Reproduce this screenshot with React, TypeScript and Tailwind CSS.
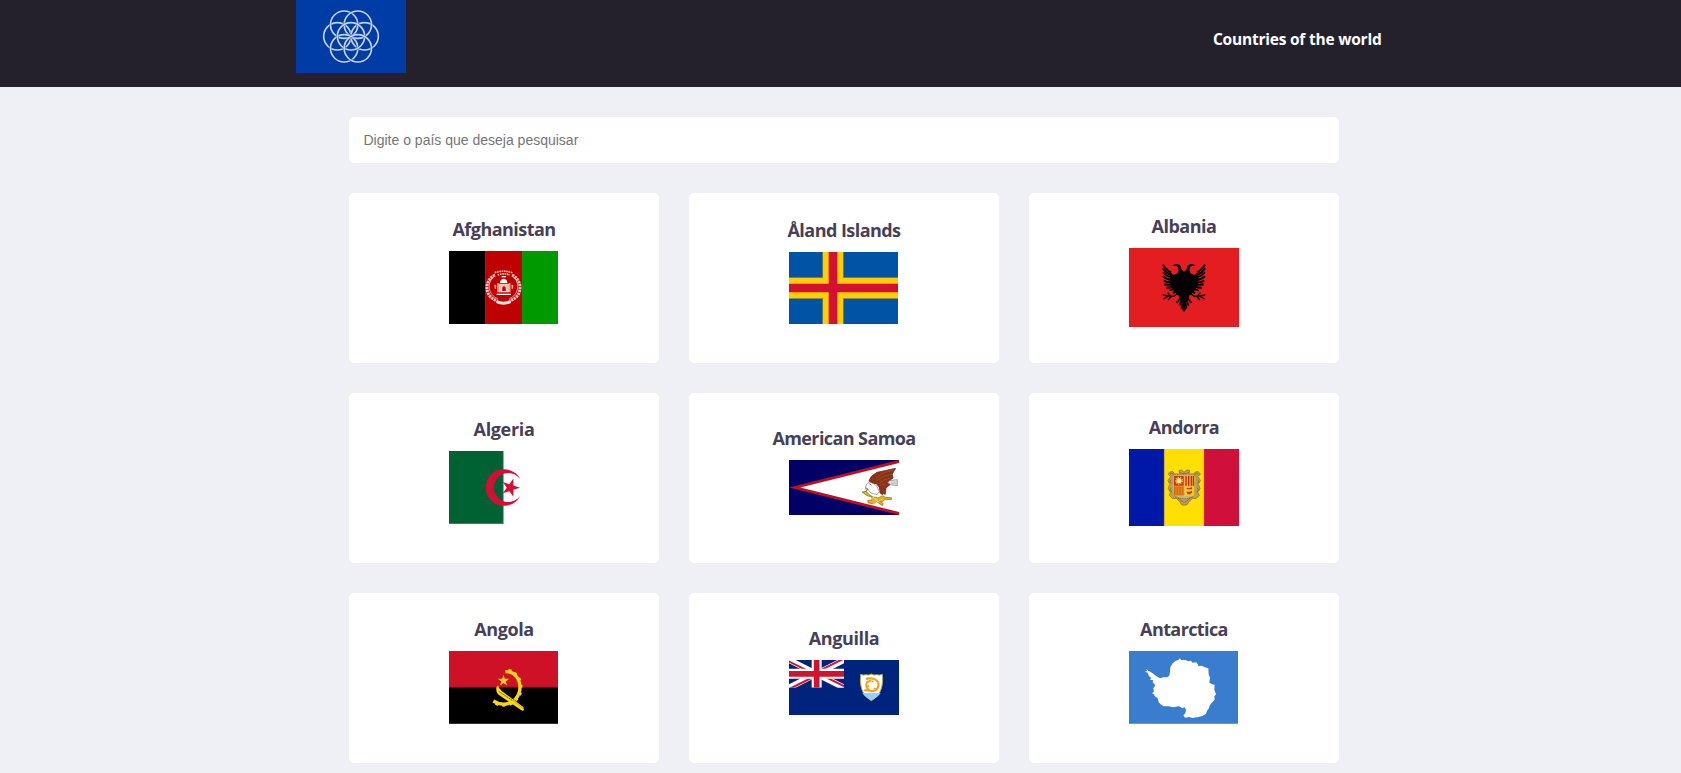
import type { ReactNode } from "react";

type Country = { name: string; tracking: string; flag: ReactNode };

function Logo() {
  const rings = [
    [124, 109],
    [206, 109],
    [144.5, 74],
    [185.5, 74],
    [144.5, 145],
    [165, 109],
    [185.5, 145],
  ];
  return (
    <svg className="block h-[73px] w-[110px]" viewBox="0 0 330 219" preserveAspectRatio="none">
      <rect width="330" height="219" fill="#003ca5" />
      {rings.map(([cx, cy], i) => (
        <g key={i} fill="none">
          <circle cx={cx} cy={cy} r="41" stroke="#003ca5" strokeWidth="8" strokeOpacity="0.55" />
          <circle cx={cx} cy={cy} r="41" stroke="#c3d3ec" strokeWidth="5" />
        </g>
      ))}
    </svg>
  );
}

function Afghanistan() {
  return (
    <svg className="block h-[73px] w-[109px]" viewBox="0 0 327 219">
      <rect width="110" height="219" fill="#000" />
      <rect x="109" width="110" height="219" fill="#bf0000" />
      <rect x="219" width="108" height="219" fill="#009900" />
      <g fill="none" stroke="#fff">
        <path d="M138 72C104 88 105 138 146 150M189 72C223 88 222 138 181 150" strokeWidth="9" strokeOpacity="0.75" strokeDasharray="7 2" />
        <path d="M134 79C113 94 117 132 146 143M193 79C214 94 210 132 181 143" strokeWidth="3" strokeOpacity="0.6" />
        <path d="M137 65q27 -9 53 0M146 72q18 -7 36 0" strokeWidth="5" strokeDasharray="5 2" strokeOpacity="0.75" />
        <path d="M143 152q21 9 42 0" strokeWidth="9" strokeOpacity="0.9" />
      </g>
      <path d="M143 130h43M149 122h31" stroke="#fff" strokeWidth="4" />
      <path d="M153 96q0 -12 11 -13q11 1 11 13z" fill="#fff" />
      <path d="M149 98h31v24h-10v-12q-5 -8 -10 0v12h-11z" fill="#f0c3b5" />
      <path d="M147 96v28M182 96v28M139 101v12M190 101v12" stroke="#eda58f" strokeWidth="5" />
      <path d="M158 77h13" stroke="#fff" strokeWidth="4" />
    </svg>
  );
}

function Aland() {
  return (
    <svg className="block h-[72px] w-[109px]" viewBox="0 0 327 216">
      <rect width="327" height="216" fill="#0053a5" />
      <path d="M100 0h64v216h-64zM0 76h327v65H0z" fill="#8b9135" />
      <path d="M102 0h60v216h-60zM0 78h327v60H0z" fill="#ffce00" />
      <path d="M119 0h26v216h-26zM0 95h327v26H0z" fill="#d21034" />
    </svg>
  );
}

function EagleHalf() {
  return (
    <g>
      <path d="M165 72L157 63L155 54L147 48L137 49L131 54L140 53L147 57L149 66L146 76L133 81L124 73L123 110L133 128L149 143L153 156L165 168Z" fill="#000" />
      <g fill="none" stroke="#000" strokeWidth="6">
        <path d="M102 50Q108 62 126 74" />
        <path d="M102 61Q110 74 128 82" />
        <path d="M102 73Q112 84 130 90" />
        <path d="M102 85Q113 95 130 97" />
        <path d="M104 98Q116 105 132 103" />
        <path d="M106 109Q120 113 135 107" />
        <path d="M112 119Q124 120 138 112" />
        <path d="M121 128Q131 125 142 116" />
        <path d="M132 136Q139 131 148 121" />
      </g>
      <path d="M149 134L134 145L119 144L101 141M119 144L103 153M128 145L117 156M126 145L116 134" fill="none" stroke="#000" strokeWidth="4" />
      <path d="M154 150L143 165M158 156L151 173M162 164L157 181" stroke="#000" strokeWidth="5" />
    </g>
  );
}

function Albania() {
  return (
    <svg className="block h-[79px] w-[110px]" viewBox="0 0 330 237">
      <rect width="330" height="237" fill="#e41e20" />
      <EagleHalf />
      <g transform="translate(330 0) scale(-1 1)">
        <EagleHalf />
      </g>
      <path d="M159 155h12l3 25l-9 12l-9 -12z" fill="#000" />
    </svg>
  );
}

function Algeria() {
  return (
    <svg className="block h-[73px] w-[109px]" viewBox="0 0 327 219">
      <rect width="327" height="219" fill="#fff" />
      <rect width="163" height="219" fill="#006233" />
      <path d="M163 0v219" stroke="#67a17f" strokeWidth="2" />
      <path d="M0 218h163" stroke="#67a17f" strokeWidth="2" />
      <path d="M215 86.500A55 55 0 1 0 215 132.500A43.500 43.500 0 1 1 215 86.500Z" fill="#d21034" />
      <path d="M213 110L193.2 116.4L193.2 137.2L181 120.4L161.2 126.8L173.4 110L161.2 93.2L181 99.6L193.2 82.8L193.2 103.6Z" fill="#d21034" />
    </svg>
  );
}

function AmericanSamoa() {
  return (
    <svg className="block h-[55px] w-[110px]" viewBox="0 0 330 165">
      <rect width="330" height="165" fill="#006" />
      <path d="M0 82.500L330 0V165Z" fill="#bd1021" />
      <path d="M34 82.500L330 9V156Z" fill="#fff" />
      <path d="M320 25L286 32L264 37L247 49L240 62L246 72L262 71L270 81L278 99L289 103L291 84L303 74L300 64L312 54L310 42Z" fill="#8c321b" stroke="#5a2514" strokeWidth="2" />
      <path d="M315 30L282 39L263 52M309 42L282 50L266 61M304 55L284 60L272 69M291 75L280 73L272 82" stroke="#a9532c" strokeWidth="2" fill="none" />
      <path d="M242 66L232 72L229 87L237 89L246 99L264 104L271 95L264 79L254 71Z" fill="#fff" stroke="#7b7478" strokeWidth="2" />
      <path d="M230 83l8 5l-7 4M241 71l7 5" stroke="#a77525" strokeWidth="3" fill="none" />
      <path d="M270 78L284 82L282 106L272 100Z" fill="#8c321b" />
      <path d="M302 62L325 59V77L308 75L296 68Z" fill="#e8e8ec" stroke="#777985" strokeWidth="2" />
      <path d="M305 66h17M307 71h16" stroke="#a4a5ae" strokeWidth="2" />
      <path d="M219 96l13 -2l6 8l14 9l17 2l12 -6l8 5l18 1v6l-19 -1l-7 7l-13 -4l15 10l-3 6l-17 -12l-7 7l-18 -3l-2 -8l13 -1l-1 -9l-14 -4z" fill="#e1b323" stroke="#886820" strokeWidth="2" />
      <path d="M235 119l20 -6l14 14M249 134l31 -17M257 101l10 13" stroke="#fff0a0" strokeWidth="2" fill="none" />
    </svg>
  );
}

function Andorra() {
  return (
    <svg className="block h-[77px] w-[110px]" viewBox="0 0 330 231">
      <rect width="107" height="231" fill="#0018a8" />
      <rect x="106" width="119" height="231" fill="#ffdf00" />
      <rect x="225" width="105" height="231" fill="#d0103a" />
      <path d="M106 0v231M224 0v231" stroke="#d8b51c" strokeWidth="2" />
      <path d="M165 70L158 63L150 65L153 75L136 75L132 68L122 69L118 76L125 83L117 94L122 106L118 119L124 130L121 139L130 148L142 148L152 158L159 168L173 168L180 158L190 148L202 148L211 139L206 130L213 119L208 106L214 94L206 83L214 76L208 68L199 69L195 75L180 75L182 64L174 63Z" fill="#bba055" stroke="#9e7b42" strokeWidth="3" />
      <path d="M123 76q9 -7 10 5M207 76q-9 -7 -10 5M127 92q-9 4 0 11M205 92q9 4 0 11M127 116q-7 4 1 14M205 116q7 4 -1 14M146 145q8 9 18 15M185 145q-8 9 -18 15M151 69q7 8 14 5q7 3 15 -5" stroke="#8a6d3f" strokeWidth="3" fill="none" />
      <path d="M133 79H196V133Q196 143 184 144L166 151L147 144Q134 142 133 133Z" fill="#d0b968" />
      <rect x="135" y="81" width="29" height="29" fill="#d52b1e" />
      <rect x="167" y="81" width="27" height="29" fill="#f7c900" />
      <path d="M171 81v29M179 81v29M187 81v29M193 81v29" stroke="#c91d26" strokeWidth="4" />
      <rect x="135" y="112" width="29" height="27" fill="#d66c12" />
      <path d="M141 112v27M149 112v27M157 112v27" stroke="#e28a1a" strokeWidth="3" />
      <rect x="167" y="112" width="27" height="28" fill="#f8ce15" />
      <circle cx="150" cy="95" r="8" fill="#ffef91" />
      <circle cx="150" cy="95" r="10" fill="none" stroke="#f6c62d" strokeWidth="4" strokeDasharray="4 3" />
      <path d="M173 119h14v-4M173 130h14v-4M175 134h10" stroke="#d52b1e" strokeWidth="4" fill="none" />
      <path d="M139 144q26 10 53 0" stroke="#816735" strokeWidth="3" strokeDasharray="4 3" fill="none" />
    </svg>
  );
}

function Angola() {
  return (
    <svg className="block h-[73px] w-[109px]" viewBox="0 0 327 219">
      <rect width="327" height="110" fill="#ce1126" />
      <rect y="109" width="327" height="110" fill="#000" />
      <path d="M0 109h327" stroke="#670913" strokeWidth="2" />
      <path d="M0 218h327" stroke="#5a5a5a" strokeWidth="2" />
      <g fill="none" stroke="#f9d616">
        <path d="M169 62C204 60 218 96 211 123C202 155 166 171 133 150" strokeWidth="10" />
        <path d="M181 64l3 -9M195 72l6 -7M206 87l9 -4M211 106h9M208 126l9 4M198 142l7 6M184 154l4 8M164 159l1 8M145 156l-3 7" strokeWidth="9" />
      </g>
      <path d="M163.500 71L167.500 83.500H180.600L170 91.200L174.100 103.700L163.500 96L152.900 103.700L157 91.200L146.400 83.500H159.500Z" fill="#f9d616" />
      <path d="M147 103C138 109 141 126 151 133L216 177Q222 182 225 176L223 168L158 119Q149 113 147 103Z" fill="#f9d616" />
      <path d="M151 122L191 149M158 119L205 153" stroke="#211b03" strokeWidth="2" strokeDasharray="5 2" />
      <path d="M194 150L224 173" stroke="#a58d11" strokeWidth="1.500" />
    </svg>
  );
}

function Anguilla() {
  return (
    <svg className="block h-[55px] w-[110px]" viewBox="0 0 330 165">
      <defs>
        <clipPath id="canton">
          <path d="M0 0h165v83H0z" />
        </clipPath>
      </defs>
      <rect width="330" height="165" fill="#00247d" />
      <g clipPath="url(#canton)">
        <path d="M0 0L165 83M165 0L0 83" stroke="#fff" strokeWidth="18" />
        <path d="M-3 3L82 45M168 80L83 38M162 -3L80 38M3 86L85 45" stroke="#cf142b" strokeWidth="6" />
        <path d="M83 0v83M0 41.500h165" stroke="#fff" strokeWidth="30" />
        <path d="M83 0v83M0 41.500h165" stroke="#cf142b" strokeWidth="17" />
      </g>
      <path d="M215 43Q223 47 231 44Q240 47 247 42Q255 47 263 44Q272 47 280 43C283 75 278 104 247 122C216 104 212 74 215 43Z" fill="#fff" stroke="#a1aa4f" strokeWidth="3" />
      <path d="M220 99H275Q267 112 247 121Q228 112 220 99Z" fill="#9cf" />
      <g fill="none" stroke="#ff9d16" strokeWidth="6">
        <path d="M232 57Q254 50 266 65L270 74" />
        <path d="M268 73Q268 93 249 94L229 89" />
        <path d="M241 91Q227 80 234 67L246 61" />
      </g>
      <path d="M229 54l10 -2l-4 10zM272 75l-10 6l8 4zM228 86l-4 7l9 2zM252 60l2 7l-8 0zM262 86l-8 -4l0 8zM232 80l7 -6l2 7z" fill="#ff9d16" />
    </svg>
  );
}

function Antarctica() {
  return (
    <svg className="block h-[73px] w-[109px]" viewBox="0 0 327 219">
      <rect width="327" height="219" fill="#3a7dce" />
      <path d="M0 218h327" stroke="#8bb2e2" strokeWidth="2" />
      <path
        d="M48 62L54 60L52 54L58 59L70 66L80 74L93 82L103 79L114 79L121 74L123 62L124 48L130 38L139 30L148 27L152 22L157 27L169 27L178 31L186 29L190 35L202 34L208 42L207 46L219 44L227 49L238 52L239 70L243 80L241 95L250 100L257 101L256 116L261 130L256 136L257 146L247 157L242 164L239 173L235 178L231 188L221 195L208 198L190 201L180 198L168 200L163 193L169 187L171 177L167 169L160 172L150 166L132 169L120 166L103 166L95 160L89 154L86 142L77 135L74 129L69 127L75 121L73 112L79 103L71 94L73 88L63 86L67 81L60 76L56 65Z"
        fill="#fff"
      />
    </svg>
  );
}

const countries: Country[] = [
  { name: "Afghanistan", tracking: "tracking-[-0.55px]", flag: <Afghanistan /> },
  { name: "Åland Islands", tracking: "tracking-[-0.55px]", flag: <Aland /> },
  { name: "Albania", tracking: "tracking-[-0.5px]", flag: <Albania /> },
  { name: "Algeria", tracking: "tracking-[-0.35px]", flag: <Algeria /> },
  { name: "American Samoa", tracking: "tracking-[-0.6px]", flag: <AmericanSamoa /> },
  { name: "Andorra", tracking: "tracking-[-0.5px]", flag: <Andorra /> },
  { name: "Angola", tracking: "tracking-[-0.4px]", flag: <Angola /> },
  { name: "Anguilla", tracking: "tracking-[-0.4px]", flag: <Anguilla /> },
  { name: "Antarctica", tracking: "tracking-[-0.6px]", flag: <Antarctica /> },
];

function CountryCard({ name, tracking, flag }: Country) {
  return (
    <li className="flex h-[170px] flex-col items-center justify-center rounded-[5px] bg-white pb-4">
      <h3 className={`mb-2.5 h-[25px] text-lg leading-[27px] font-bold whitespace-nowrap text-[#453f57] ${tracking}`}>
        {name}
      </h3>
      <div className="w-[110px]">{flag}</div>
    </li>
  );
}

export default function App() {
  return (
    <div className="h-[773px] overflow-hidden bg-[#eff0f6] font-['Open_Sans','Noto_Sans',sans-serif]">
      <header className="h-[87px] bg-[#24212c]">
        <div className="ml-[296px] flex w-[1085.500px] items-start justify-between">
          <Logo />
          <h1 className="pt-7 text-[15.500px] leading-[23px] font-bold tracking-[-0.22px] whitespace-nowrap text-white">
            Countries of the world
          </h1>
        </div>
      </header>
      <main className="ml-[349px] w-[990px] pt-[30px]">
        <input
          type="text"
          placeholder="Digite o país que deseja pesquisar"
          className="block h-[46px] w-full rounded-[5px] bg-white px-[14.500px] font-['Liberation_Sans',Arial,sans-serif] text-sm text-[#333] outline-none placeholder:text-[#757575]"
        />
        <ul className="mt-[30px] grid grid-cols-3 gap-[30px]">
          {countries.map((country) => (
            <CountryCard key={country.name} {...country} />
          ))}
        </ul>
      </main>
    </div>
  );
}
